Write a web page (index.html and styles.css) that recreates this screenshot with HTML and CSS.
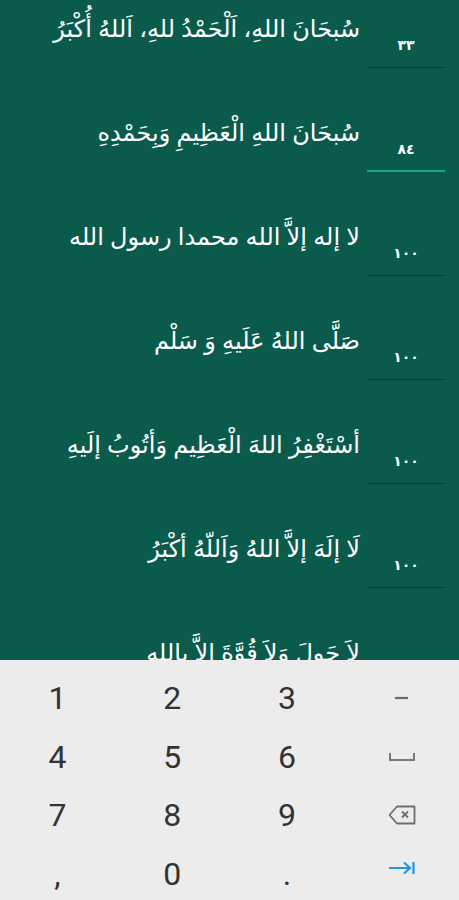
FILE: index.html
```html
<!DOCTYPE html>
<html lang="ar" dir="rtl">
<head>
    <meta charset="UTF-8">
    <meta name="viewport" content="width=device-width, initial-scale=1.0">
    <title>Tasbih Counter</title>
    <link rel="stylesheet" href="styles.css">
</head>
<body>
    <div class="zikr-list">
        <div class="zikr-scroll">
            <div class="zikr-row">
                <div class="count">٣٣</div>
                <div class="zikr-text">سُبحَانَ اللهِ، اَلْحَمْدُ للهِ، اَللهُ أُكْبَرُ</div>
            </div>
            <div class="zikr-row">
                <div class="count active">٨٤</div>
                <div class="zikr-text">سُبحَانَ اللهِ الْعَظِيمِ وَبِحَمْدِهِ</div>
            </div>
            <div class="zikr-row">
                <div class="count">١٠٠</div>
                <div class="zikr-text">لا إله إلاَّ الله محمدا رسول الله</div>
            </div>
            <div class="zikr-row">
                <div class="count">١٠٠</div>
                <div class="zikr-text">صَلَّى اللهُ عَلَيهِ وَ سَلْم</div>
            </div>
            <div class="zikr-row">
                <div class="count">١٠٠</div>
                <div class="zikr-text">أسْتَغْفِرُ اللهَ الْعَظِيم وَأتُوبُ إلَيهِ</div>
            </div>
            <div class="zikr-row">
                <div class="count">١٠٠</div>
                <div class="zikr-text">لَا إلَهَ إلاَّ اللهُ وَاَللّهُ أكْبَرُ</div>
            </div>
            <div class="zikr-row">
                <div class="count">١٠٠</div>
                <div class="zikr-text">لاَ حَولَ وَلاَ قُوَّةَ الاَّ بالله</div>
            </div>
        </div>
    </div>

    <!-- numeric keyboard -->
    <div class="keyboard" dir="ltr">
        <div class="key">1</div>
        <div class="key">2</div>
        <div class="key">3</div>
        <div class="key">
            <svg width="26" height="6" viewBox="0 0 26 6"><path d="M6 3H19" stroke="#6b6b6b" stroke-width="2.2"/></svg>
        </div>
        <div class="key">4</div>
        <div class="key">5</div>
        <div class="key">6</div>
        <div class="key">
            <svg width="28" height="10" viewBox="0 0 28 10"><path d="M2 1V8H26V1" fill="none" stroke="#7a7a7a" stroke-width="2"/></svg>
        </div>
        <div class="key">7</div>
        <div class="key">8</div>
        <div class="key">9</div>
        <div class="key">
            <svg width="28" height="20" viewBox="0 0 28 20"><path d="M9 1.5H26.5V18.5H9L1.5 10Z" fill="none" stroke="#6e6e6e" stroke-width="1.8" stroke-linejoin="round"/><path d="M14 6.5L20 12.5M20 6.5L14 12.5" stroke="#6e6e6e" stroke-width="1.8"/></svg>
        </div>
        <div class="key">,</div>
        <div class="key">0</div>
        <div class="key">.</div>
        <div class="key">
            <svg class="tab-icon" width="28" height="14" viewBox="0 0 28 14"><path d="M1 7H22M16 1.5L22 7L16 12.5M25.5 1V13" fill="none" stroke="#2196e3" stroke-width="2.2"/></svg>
        </div>
    </div>
</body>
</html>
```

FILE: styles.css
```css
html, body {
    margin: 0;
    padding: 0;
}
body {
    height: 900px;
    display: flex;
    flex-direction: column;
    overflow: hidden;
    background-color: #0b5b4c;
    font-family: "Noto Sans", "DejaVu Sans", sans-serif;
}
.zikr-list {
    flex: 1;
    overflow: hidden;
}
.zikr-scroll {
    margin-top: -36px;
}
.zikr-row {
    height: 104px;
    display: flex;
    gap: 7px;
    padding-right: 14px;
}
.count {
    width: 78px;
    height: 45px;
    box-sizing: border-box;
    align-self: flex-end;
    border-bottom: 1px solid #083b32;
    text-align: center;
    line-height: 44px;
    font-size: 14px;
    font-weight: bold;
    color: #ffffff;
}
.count.active {
    border-bottom: 2px solid #17a591;
}
.zikr-text {
    margin-top: 49px;
    line-height: 30px;
    font-size: 24px;
    color: #ffffff;
    white-space: nowrap;
}
.keyboard {
    height: 240px;
    box-sizing: border-box;
    padding-top: 9px;
    background-color: #ececec;
    display: grid;
    grid-template-columns: repeat(4, 1fr);
    grid-auto-rows: 58.5px;
}
.key {
    display: flex;
    align-items: center;
    justify-content: center;
    font-family: Roboto, sans-serif;
    font-size: 32px;
    color: #333333;
}
.tab-icon {
    margin-bottom: 12px;
}
```
